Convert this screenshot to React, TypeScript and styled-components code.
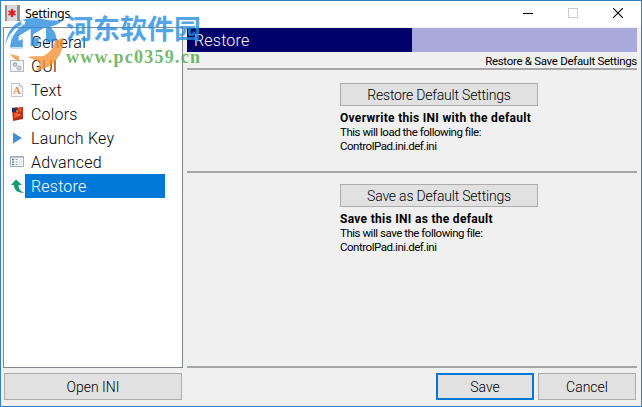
import React from 'react';
import styled, { createGlobalStyle, css } from 'styled-components';

const GlobalStyle = createGlobalStyle`
  * {
    box-sizing: border-box;
  }

  body {
    margin: 0;
    overflow: hidden;
    font-family: Roboto, 'Liberation Sans', sans-serif;
    color: #000;
  }
`;

const Window = styled.div`
  position: relative;
  display: flex;
  flex-direction: column;
  width: 642px;
  height: 407px;
  border: 1px solid #2f80c4;
  background: #f0f0f0;
`;

const TitleBar = styled.header`
  display: flex;
  align-items: center;
  height: 26px;
  flex: none;
  padding: 0 13px 2px 4px;
  background: #fff;
`;

const Title = styled.h1`
  flex: 1;
  margin: 0 0 0 5px;
  font: 400 12.5px 'Noto Sans', sans-serif;
  letter-spacing: -0.3px;
`;

const WindowControls = styled.div`
  display: flex;
  align-items: center;
  gap: 35px;
  padding-right: 5px;
`;

const Body = styled.div`
  display: flex;
  gap: 4px;
  height: 341px;
  padding: 0 4px 0 2px;
`;

const Sidebar = styled.nav`
  width: 180px;
  padding: 2px 0 0 6px;
  border: 1px solid #828790;
  background: #fff;
`;

const NavRow = styled.div`
  display: flex;
  align-items: center;
  height: 24px;
`;

const NavIcon = styled.svg`
  flex: none;
  width: 15px;
  height: 16px;
`;

const NavLabel = styled.span<{ $selected?: boolean }>`
  width: 140px;
  height: 24px;
  padding-left: 6px;
  line-height: 25px;
  font-size: 16px;
  font-weight: 300;
  letter-spacing: 0.2px;
  ${props =>
    props.$selected &&
    css`
      background: #0078d7;
      color: #fff;
    `}
`;

const Main = styled.main`
  display: flex;
  flex-direction: column;
  flex: 1;
`;

const Heading = styled.h2`
  flex: none;
  height: 24px;
  margin: 1px 0 0;
  padding-left: 7px;
  line-height: 25px;
  font-size: 16px;
  font-weight: 300;
  letter-spacing: 0.2px;
  color: #fff;
  background: linear-gradient(to right, #000068 225px, #a9a9dc 225px);
`;

const Subheading = styled.div`
  flex: none;
  height: 16px;
  line-height: 18px;
  font-size: 11.5px;
  letter-spacing: -0.3px;
  text-align: right;
  white-space: nowrap;
`;

const Rule = styled.hr`
  flex: none;
  width: 100%;
  height: 2px;
  margin: 0;
  border: 0;
  background: #a6a6a6;
`;

const Section = styled.section<{ $height: number; $top: number }>`
  flex: none;
  height: ${props => props.$height}px;
  padding: ${props => props.$top}px 0 0 153px;
`;

const Button = styled.button<{ $width: number; $height?: number; $primary?: boolean }>`
  display: block;
  width: ${props => props.$width}px;
  height: ${props => props.$height ?? 27}px;
  padding: 0;
  border: ${props => (props.$primary ? '2px solid #0078d7' : '1px solid #adadad')};
  background: #e1e1e1;
  font: 300 14px Roboto, sans-serif;
  letter-spacing: ${props => (props.$width > 180 ? -0.2 : 0)}px;
  color: #000;
  white-space: nowrap;
`;

const Strong = styled.div`
  margin-top: 5px;
  line-height: 14px;
  font-size: 12px;
  font-weight: 700;
  letter-spacing: 0.3px;
  white-space: nowrap;
`;

const Line = styled.div`
  line-height: 14px;
  font-size: 11.5px;
  letter-spacing: -0.47px;
  white-space: nowrap;
`;

const Footer = styled.footer`
  display: flex;
  gap: 4px;
  padding: 5px 5px 0 3px;
`;

const Spacer = styled.div`
  flex: 1;
`;

const Watermark = styled.div`
  position: absolute;
  top: 7px;
  left: 3px;
  display: flex;
  pointer-events: none;
`;

const WatermarkLogo = styled.svg`
  width: 64px;
  height: 66px;
  margin-right: -2px;
`;

const WatermarkName = styled.div`
  margin-top: 3px;
  line-height: 34px;
  font-family: 'Noto Sans CJK SC', sans-serif;
  font-size: 27px;
  font-weight: 700;
  white-space: nowrap;
  color: rgba(38, 139, 221, 0.78);
`;

const WatermarkUrl = styled.div`
  line-height: 20px;
  margin-top: 2px;
  font-family: 'Liberation Serif', serif;
  font-size: 18px;
  font-weight: 700;
  letter-spacing: 1.25px;
  color: rgba(78, 166, 67, 0.8);
`;

interface NavItem {
  label: string;
  icon: React.ReactNode;
}

const items: NavItem[] = [
  {
    label: 'General',
    icon: <path d="M1.5 1.5h8l3 3v10h-11z" fill="#fafcff" stroke="#d3dce8" />,
  },
  {
    label: 'GUI',
    icon: (
      <>
        <rect x="0.5" y="2.5" width="13" height="11" fill="#f1f4f8" stroke="#b4bac4" />
        <circle cx="5" cy="6.5" r="2.3" fill="#a9aeb6" />
        <circle cx="9" cy="10" r="2.5" fill="#b8bdc4" />
        <circle cx="5" cy="6.5" r="0.7" fill="#fff" />
        <circle cx="9" cy="10" r="0.7" fill="#fff" />
      </>
    ),
  },
  {
    label: 'Text',
    icon: (
      <>
        <path d="M1.5 1.5h8l3 3v10h-11z" fill="#fafcff" stroke="#b8c6da" />
        <path d="M9.5 1.5v3h3" fill="none" stroke="#b8c6da" />
        <text x="7" y="12" textAnchor="middle" fontFamily="Liberation Serif" fontWeight="700" fontSize="11" fill="#e58a4c">
          A
        </text>
      </>
    ),
  },
  {
    label: 'Colors',
    icon: (
      <>
        <path d="M2 2l11-1v12L3 15z" fill="#b02c18" />
        <path d="M2 2l5-.5v4.5H2z" fill="#27306e" />
        <path d="M8 2l4-.5v4H8z" fill="#f04a23" />
        <path d="M4 7h4v4l-4 1z" fill="#ef5a2a" />
        <path d="M9 6l3 1v4l-3-1z" fill="#d9321b" />
        <path d="M6 4l2 1-1 2zM7 9l3-1-1 2z" fill="#ffcc36" />
      </>
    ),
  },
  {
    label: 'Launch Key',
    icon: <path d="M3 2.5v11L12 8z" fill="#3f8fd6" />,
  },
  {
    label: 'Advanced',
    icon: (
      <>
        <rect x="0.5" y="2.5" width="13" height="10" fill="#f8fafc" stroke="#a5adb9" />
        <path d="M1 3.5h12" stroke="#bac4d2" />
        <path d="M2 5.5h2M2 8h2M2 10.5h2" stroke="#4c83bd" strokeWidth="1.4" />
        <path d="M5.5 5.5h2M5.5 8h2M5.5 10.5h2" stroke="#8294a8" />
        <path d="M9 6h3M9 8h3M9 10h3" stroke="#d6dbe2" />
      </>
    ),
  },
  {
    label: 'Restore',
    icon: <path d="M6 1.5L12 7H8.5c0 3.5 1.5 6 5.5 7.5C8 15.5 4 12 4 7H1z" fill="#149b72" />,
  },
];

const App: React.FC = () => (
  <>
    <GlobalStyle />
    <Window>
      <TitleBar>
        <svg width="15" height="16" viewBox="0 0 15 16">
          <rect width="15" height="16" fill="#8f8f8f" />
          <rect x="2" width="10" height="16" fill="#d9d9d9" />
          <path d="M7 4v8M3.5 6l7 4M3.5 10l7-4" stroke="#e01420" strokeWidth="2" />
        </svg>
        <Title>Settings</Title>
        <WindowControls>
          <svg width="10" height="10">
            <path d="M0 5.5h10" stroke="#000" />
          </svg>
          <svg width="10" height="10">
            <rect x="0.5" y="0.5" width="9" height="9" fill="none" stroke="#ccc" />
          </svg>
          <svg width="10" height="10">
            <path d="M0 0l10 10M10 0L0 10" stroke="#000" strokeWidth="1.1" />
          </svg>
        </WindowControls>
      </TitleBar>
      <Body>
        <Sidebar>
          {items.map(item => (
            <NavRow key={item.label}>
              <NavIcon viewBox="0 0 15 16">{item.icon}</NavIcon>
              <NavLabel $selected={item.label === 'Restore'}>{item.label}</NavLabel>
            </NavRow>
          ))}
        </Sidebar>
        <Main>
          <Heading>Restore</Heading>
          <Subheading>Restore &amp; Save Default Settings</Subheading>
          <Rule />
          <Section $height={101} $top={13}>
            <Button $width={198} $height={23}>
              Restore Default Settings
            </Button>
            <Strong>Overwrite this INI with the default</Strong>
            <Line>This will load the following file:</Line>
            <Line>ControlPad.ini.def.ini</Line>
          </Section>
          <Rule />
          <Section $height={193} $top={11}>
            <Button $width={198} $height={23}>
              Save as Default Settings
            </Button>
            <Strong>Save this INI as the default</Strong>
            <Line>This will save the following file:</Line>
            <Line>ControlPad.ini.def.ini</Line>
          </Section>
          <Rule />
        </Main>
      </Body>
      <Footer>
        <Button $width={178}>Open INI</Button>
        <Spacer />
        <Button $width={98} $primary>
          Save
        </Button>
        <Button $width={98}>Cancel</Button>
      </Footer>
      <Watermark>
        <WatermarkLogo viewBox="0 0 192 198" opacity="0.78">
          <path
            fillRule="evenodd"
            fill="#268bdd"
            d="M4 112C8 62 44 28 92 30c30 1 52 14 88 4-14 14-28 20-42 22 14 12 20 26 20 42l-32 6V56l-38 23v13l16-4v26H80V62L44 84v14l12-4v24H18C22 84 38 62 62 48 34 54 12 80 4 112zM56 34l-2 6-6 2 5 3 0 6 5-3 6 2-2-6 4-5-6 0z"
          />
          <path
            d="M16 138l28 6 2 16-14-6zM70 147l20-2h26c22-10 32-26 36-46l26-10c4 42-24 92-84 100 10-10 14-20 13-28z"
            fill="#f39232"
          />
        </WatermarkLogo>
        <div>
          <WatermarkName>河东软件园</WatermarkName>
          <WatermarkUrl>www.pc0359.cn</WatermarkUrl>
        </div>
      </Watermark>
    </Window>
  </>
);

export default App;
